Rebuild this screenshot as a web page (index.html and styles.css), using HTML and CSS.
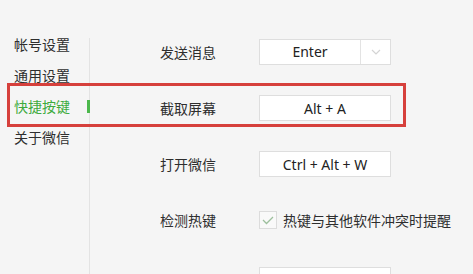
FILE: index.html
```html
<!DOCTYPE html>
<html lang="zh-CN">
<head>
<meta charset="utf-8">
<link rel="stylesheet" href="styles.css">
</head>
<body>
<div class="window">
  <nav class="sidebar">
    <div class="nav-item">帐号设置</div>
    <div class="nav-item">通用设置</div>
    <div class="nav-item active">快捷按键</div>
    <div class="nav-item">关于微信</div>
  </nav>
  <main class="content">
    <div class="row">
      <span class="label">发送消息</span>
      <div class="box select">
        <span class="value">Enter</span>
        <span class="arrow"><svg width="12" height="8" viewBox="0 0 12 8"><path d="M2 2 L6 6 L10 2" fill="none" stroke="#d4d4d4" stroke-width="1.2"/></svg></span>
      </div>
    </div>
    <div class="row">
      <span class="label">截取屏幕</span>
      <div class="box">Alt + A</div>
    </div>
    <div class="row">
      <span class="label">打开微信</span>
      <div class="box">Ctrl + Alt + W</div>
    </div>
    <div class="row">
      <span class="label">检测热键</span>
      <label class="check">
        <span class="checkbox"><svg width="14" height="12" viewBox="0 0 14 12"><path d="M2 6 L5.5 9.5 L12 3" fill="none" stroke="#9dbf9d" stroke-width="1.3"/></svg></span>
        <span class="check-text">热键与其他软件冲突时提醒</span>
      </label>
    </div>
    <div class="row last">
      <span class="label"></span>
      <div class="box"></div>
    </div>
  </main>
  <div class="highlight"></div>
</div>
</body>
</html>
```

FILE: styles.css
```css
* { box-sizing: border-box; }
html, body {
  margin: 0;
  padding: 0;
  background: #f5f5f5;
}
body {
  font-family: "Noto Sans CJK SC", "Noto Sans", sans-serif;
  color: #2e2e2e;
  font-size: 14px;
  width: 473px;
  height: 274px;
  overflow: hidden;
}
.window {
  position: relative;
  display: flex;
  height: 274px;
  overflow: hidden;
}
.sidebar {
  width: 90px;
  flex: none;
  padding-top: 29px;
  position: relative;
}
.sidebar::after {
  content: "";
  position: absolute;
  left: 89px;
  top: 38px;
  bottom: 0;
  width: 1px;
  background: #e3e3e3;
}
.nav-item {
  height: 31px;
  line-height: 31px;
  padding-left: 14px;
  position: relative;
}
.nav-item.active {
  color: #3dab3d;
}
.nav-item.active::after {
  content: "";
  position: absolute;
  left: 87px;
  top: 9px;
  width: 3px;
  height: 13px;
  background: #4cb84c;
  z-index: 1;
}
.content {
  flex: 1;
  padding-top: 24px;
  padding-left: 70px;
  height: 274px;
  overflow: hidden;
}
.row {
  display: flex;
  align-items: center;
  height: 56px;
}
.row.last {
  margin-top: 4px;
}
.label {
  width: 99px;
  flex: none;
}
.box {
  width: 132px;
  height: 26px;
  background: #fff;
  border: 1px solid #dedede;
  display: flex;
  align-items: center;
  justify-content: center;
  font-family: "Noto Sans", "Open Sans", sans-serif;
  font-size: 14px;
  color: #222;
}
.select {
  justify-content: flex-start;
}
.select .value {
  width: 101px;
  text-align: center;
  border-right: 1px solid #e3e3e3;
  height: 100%;
  line-height: 24px;
}
.select .arrow {
  flex: 1;
  display: flex;
  justify-content: center;
  align-items: center;
}
.check {
  display: flex;
  align-items: center;
}
.checkbox {
  width: 18px;
  height: 18px;
  border: 1px solid #dcdcdc;
  background: #f9f9f9;
  display: flex;
  align-items: center;
  justify-content: center;
  margin-right: 6px;
}
.check-text {
  color: #2e2e2e;
}
.highlight {
  position: absolute;
  left: 7px;
  top: 83px;
  width: 399px;
  height: 44px;
  border: 3px solid #d6403c;
  pointer-events: none;
}
```
